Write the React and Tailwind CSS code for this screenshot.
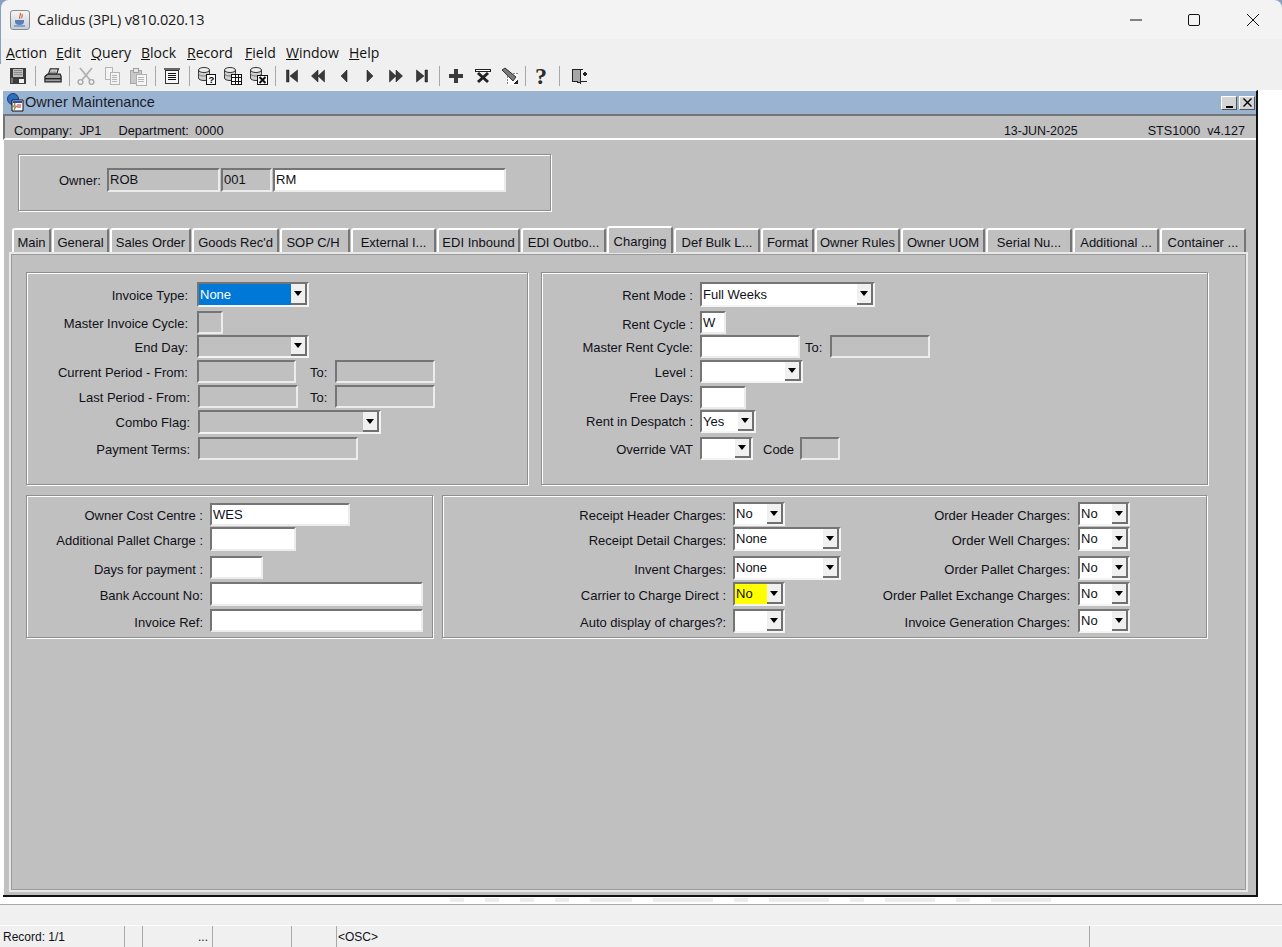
import React from 'react';

const ui = "font-['Liberation_Sans',Arial,sans-serif] text-[13px] text-[#101018]";

const tabs = [
  { label: 'Main', w: 'w-[39px]' },
  { label: 'General', w: 'w-[57px]' },
  { label: 'Sales Order', w: 'w-[81px]' },
  { label: "Goods Rec'd", w: 'w-[87px]' },
  { label: 'SOP C/H', w: 'w-[70px]', pad: 'pr-[4px]' },
  { label: 'External I...', w: 'w-[85px]' },
  { label: 'EDI Inbound', w: 'w-[83px]' },
  { label: 'EDI Outbo...', w: 'w-[85px]' },
  { label: 'Charging', w: 'w-[66px]', active: true },
  { label: 'Def Bulk L...', w: 'w-[86px]' },
  { label: 'Format', w: 'w-[53px]' },
  { label: 'Owner Rules', w: 'w-[85px]' },
  { label: 'Owner UOM', w: 'w-[84px]' },
  { label: 'Serial Nu...', w: 'w-[86px]' },
  { label: 'Additional ...', w: 'w-[86px]' },
  { label: 'Container ...', w: 'w-[86px]' },
];

const menus = [
  { a: 'A', b: 'ction', w: 'w-[50px]' },
  { a: 'E', b: 'dit', w: 'w-[35px]' },
  { a: 'Q', b: 'uery', w: 'w-[50px]' },
  { a: 'B', b: 'lock', w: 'w-[46px]' },
  { a: 'R', b: 'ecord', w: 'w-[58px]' },
  { a: 'F', b: 'ield', w: 'w-[41px]' },
  { a: 'W', b: 'indow', w: 'w-[63px]' },
  { a: 'H', b: 'elp', w: 'w-[40px]' },
];

// sunken text item, Oracle Forms look
const Field = ({ w, h = 'h-[23px]', value = '', disabled, className = '' }) => (
  <div
    className={`${w} ${h} shrink-0 flex items-center border-2 border-t-[#757575] border-l-[#757575] border-r-[#ececec] border-b-[#ececec] pl-px ${disabled ? 'bg-[#c0c0c0]' : 'bg-white'} ${className}`}
  >
    {value}
  </div>
);

const Combo = ({ w, h = 'h-[24px]', value = '', disabled, focus, yellow }) => (
  <div className={`${w} ${h} shrink-0 flex border-2 border-t-[#757575] border-l-[#757575] border-r-[#f4f4f4] border-b-[#f4f4f4]`}>
    <div
      className={`flex-1 flex items-center pl-px ${disabled ? 'bg-[#c0c0c0]' : focus ? 'bg-[#0078d7] text-white' : yellow ? 'bg-[#ffff00]' : 'bg-white'}`}
    >
      {value}
    </div>
    <div className="w-[16px] bg-[#f0f0f0] border-r-2 border-b-2 border-[#707070] flex items-center justify-center">
      <svg width="8" height="5" viewBox="0 0 8 5">
        <path d="M0 0h8L4 5z" fill="#000" />
      </svg>
    </div>
  </div>
);

const Row = ({ h, label, lw, gap = 'mr-[7px]', lh = 'leading-[25px]', children }) => (
  <div className={`flex items-start ${h}`}>
    <div className={`${lw} ${gap} ${lh} shrink-0 text-right whitespace-nowrap`}>{label}</div>
    {children}
  </div>
);

const etched = 'border border-[#8e8e8e] shadow-[inset_1px_1px_0_#fff,1px_1px_0_#fff]';

const Sep = ({ className = '' }) => <div className={`w-px h-[20px] bg-[#a8a8a8] shrink-0 ${className}`} />;

const Tool = ({ children, className = '' }) => (
  <div className={`w-[26px] h-[24px] flex items-center justify-center shrink-0 ${className}`}>{children}</div>
);

const Ico = ({ children, size = 20, box = 20 }) => (
  <svg width={size} height={size} viewBox={`0 0 ${box} ${box}`} shapeRendering="crispEdges">
    {children}
  </svg>
);

const Cylinder = () => (
  <g fill="#d0d0d0" stroke="#333" shapeRendering="auto">
    <path d="M1.5 4v8c0 1.5 2.5 2.5 5.5 2.5s5.5-1 5.5-2.5V4" />
    <ellipse cx="7" cy="4" rx="5.5" ry="2.5" fill="#eee" />
    <path d="M1.5 7.5c0 1.5 2.5 2.5 5.5 2.5s5.5-1 5.5-2.5" fill="none" stroke="#777" />
  </g>
);

const Tri = ({ d }) => (
  <svg width="14" height="14" viewBox="0 0 14 14">
    <path d={d} fill="#3a3a3a" stroke="#111" strokeWidth="0.5" />
  </svg>
);

const Toolbar = () => (
  <div className="h-[26px] pb-[2px] flex items-center pl-[5px] bg-[#f0f0f0] shrink-0">
    <Tool>
      <Ico>
        <path d="M2 2h15l1 1v15H2z" fill="#3c3c3c" />
        <path d="M5 3h10v8H5z" fill="#bcbcbc" />
        <path d="M6 4h8M6 6h8M6 8h8" stroke="#8a8a8a" />
        <path d="M11 13h5v4h-5z" fill="#f2f2f2" />
        <path d="M3 12h2v5H3z" fill="#777" />
      </Ico>
    </Tool>
    <Sep className="ml-[4px] mr-[4px]" />
    <Tool>
      <svg width="20" height="18" viewBox="0 0 22 20">
        <path d="M6 8l2-6h9l-2 6z" fill="#fff" stroke="#222" strokeWidth="1.3" />
        <path d="M2 10.5 5 8h14l1 2.5v6H2z" fill="#9a9a9a" stroke="#222" strokeWidth="1.3" />
        <path d="M2 13h18" stroke="#222" strokeWidth="1.5" />
        <path d="M8 4.5h7M7.5 6h7" stroke="#777" />
      </svg>
    </Tool>
    <Sep className="ml-[3px] mr-[3px]" />
    <Tool>
      <svg width="18" height="18" viewBox="0 0 18 18">
        <path d="M3 1l10 12M15 1 5 13" stroke="#b0b0b0" strokeWidth="1.8" fill="none" />
        <circle cx="3.5" cy="15" r="2.4" fill="none" stroke="#a8a8a8" strokeWidth="1.4" />
        <circle cx="14.5" cy="15" r="2.4" fill="none" stroke="#a8a8a8" strokeWidth="1.4" />
      </svg>
    </Tool>
    <Tool>
      <Ico>
        <path d="M3 1.5h7v12H3z" fill="#f4f4f4" stroke="#b4b4b4" />
        <path d="M8 6.5h9v12H8z" fill="#f4f4f4" stroke="#b4b4b4" />
        <path d="M10 9.5h5M10 11.5h5M10 13.5h5M10 15.5h5" stroke="#b4b4b4" />
      </Ico>
    </Tool>
    <Tool>
      <Ico>
        <path d="M2 4h11v13H2z" fill="#c8c8c8" stroke="#a8a8a8" />
        <path d="M5 2h5v4H5z" fill="#e8e8e8" stroke="#a0a0a0" />
        <path d="M8 8h10v11H8z" fill="#f6f6f6" stroke="#b0b0b0" />
        <path d="M10 11h6M10 13h6M10 15h6" stroke="#b4b4b4" />
      </Ico>
    </Tool>
    <Sep className="ml-[4px] mr-[3px]" />
    <Tool>
      <Ico>
        <path d="M2 2h16v2H2z" fill="#666" />
        <path d="M3.500 4.500h13v13h-13z" fill="#f6f6f6" stroke="#333" />
        <path d="M6 7h8M6 9h8M6 11h8M6 13h8" stroke="#111" />
      </Ico>
    </Tool>
    <Sep className="ml-[4px] mr-[4px]" />
    <Tool>
      <Ico>
        <Cylinder />
        <path d="M9.500 8.500h9v10h-9z" fill="#fff" stroke="#111" />
        <text x="11.5" y="17" fontSize="9.5" fontWeight="700" fontFamily="Liberation Sans" shapeRendering="auto">?</text>
      </Ico>
    </Tool>
    <Tool>
      <Ico>
        <Cylinder />
        <path d="M8.500 8.500h10v10h-10z" fill="#fff" stroke="#111" />
        <path d="M8.500 11.500h10M8.500 15h10M12 8.500v10M15.500 8.500v10" stroke="#111" />
      </Ico>
    </Tool>
    <Tool>
      <Ico>
        <Cylinder />
        <path d="M8.500 9.500h10v9h-10z" fill="#fff" stroke="#111" />
        <path d="M10.500 11l6 6M16.500 11l-6 6" stroke="#111" strokeWidth="2" shapeRendering="auto" />
      </Ico>
    </Tool>
    <Sep className="ml-[3px] mr-[3px]" />
    <Tool><Tri d="M1.500 1h2.500v12H1.500zM12.500 1v12L5 7z" /></Tool>
    <Tool><Tri d="M7 1v12L.5 7zM13.500 1v12L7 7z" /></Tool>
    <Tool><Tri d="M10 1v12L4 7z" /></Tool>
    <Tool><Tri d="M4 1v12l6-6z" /></Tool>
    <Tool><Tri d="M.5 1v12L7 7zM7 1v12l6.500-6z" /></Tool>
    <Tool><Tri d="M1.500 1v12L9 7zM10 1h2.500v12H10z" /></Tool>
    <Sep className="ml-[4px] mr-[3px]" />
    <Tool>
      <Ico>
        <path d="M8 3h4v5h5v4h-5v5H8v-5H3V8h5z" fill="#3a3a3a" />
      </Ico>
    </Tool>
    <Tool className="ml-px">
      <Ico>
        <path d="M2.500 3.500h15v2h-15z" fill="#fff" stroke="#222" />
        <path d="M5 7l10 9M15 7 5 16" stroke="#222" strokeWidth="3" shapeRendering="auto" />
      </Ico>
    </Tool>
    <Tool className="ml-px">
      <Ico>
        <path d="M7 7h11v12H7z" fill="#fff" />
        <path d="M7 7h11M7 7v12" stroke="#888" strokeDasharray="2 1" fill="none" />
        <path d="M2 4l3-2 11 9-3 4z" fill="#7a7a7a" stroke="#333" shapeRendering="auto" />
        <path d="M13 18l5-4v4z" fill="#222" />
      </Ico>
    </Tool>
    <Sep className="ml-[2px] mr-[2px]" />
    <Tool>
      <span className="font-['Liberation_Serif',serif] font-bold text-[24px] leading-none text-[#2a2a2a]">?</span>
    </Tool>
    <Sep className="ml-[5px] mr-[5px]" />
    <Tool>
      <Ico>
        <path d="M4 3h8v14l-5-2H4z" fill="#a8a8a8" stroke="#222" />
        <path d="M12 3h2v1M12 15h7" stroke="#222" fill="none" />
        <path d="M15 8h4M17 6v4" stroke="#222" strokeWidth="1.2" />
      </Ico>
    </Tool>
  </div>
);

const ChargeCol = ({ rows, lw, gap }) => (
  <div className="flex flex-col">
    {rows.map((r) => (
      <Row key={r.label} h={r.h} label={r.label} lw={lw} gap={gap} lh="leading-[27px]">
        {r.field}
      </Row>
    ))}
  </div>
);

const leftCharges = [
  { label: 'Receipt Header Charges:', h: 'h-[25px]', field: <Combo w="w-[52px]" value="No" /> },
  { label: 'Receipt Detail Charges:', h: 'h-[29px]', field: <Combo w="w-[108px]" value="None" /> },
  { label: 'Invent Charges:', h: 'h-[26px]', field: <Combo w="w-[108px]" value="None" /> },
  { label: 'Carrier to Charge Direct :', h: 'h-[27px]', field: <Combo w="w-[52px]" value="No" yellow /> },
  { label: 'Auto display of charges?:', h: 'h-[25px]', field: <Combo w="w-[52px]" /> },
];

const rightCharges = [
  { label: 'Order Header Charges:', h: 'h-[25px]', field: <Combo w="w-[52px]" value="No" /> },
  { label: 'Order Well Charges:', h: 'h-[29px]', field: <Combo w="w-[52px]" value="No" /> },
  { label: 'Order Pallet Charges:', h: 'h-[26px]', field: <Combo w="w-[52px]" value="No" /> },
  { label: 'Order Pallet Exchange Charges:', h: 'h-[27px]', field: <Combo w="w-[52px]" value="No" /> },
  { label: 'Invoice Generation Charges:', h: 'h-[25px]', field: <Combo w="w-[52px]" value="No" /> },
];

const ghost = ['w-[14px]', 'w-[14px]', 'w-[14px]', 'w-[14px]', 'w-[42px]', 'w-[60px]', 'w-[14px]', 'w-[60px]', 'w-[14px]', 'w-[50px]', 'w-[14px]', 'w-[60px]'];

const App = () => {
  return (
    <div className={`${ui} w-[1282px] h-[947px] overflow-hidden flex flex-col bg-[#8aa0c0]`}>
      {/* title bar */}
      <div className="h-[39px] shrink-0 ml-px rounded-t-lg bg-[#f3f3f3] flex items-center font-['Open_Sans',sans-serif] text-[14px] text-[#1a1a1a]">
        <div className="ml-[9px] w-[20px] h-[20px] rounded-[3px] border border-[#8a8a8a] bg-gradient-to-b from-[#f4f4f4] to-[#c4cedd] flex items-center justify-center">
          <svg width="14" height="16" viewBox="0 0 14 16">
            <path d="M7 1c2 2-2 3 0 6M9 2c1 2-1 3 0 4" stroke="#d9622b" fill="none" strokeWidth="1.2" />
            <path d="M2 8h9v2c0 2-2 3-4.500 3S2 12 2 10z" fill="#5a7fb5" />
            <path d="M1 14h11" stroke="#5a7fb5" strokeWidth="1.2" />
          </svg>
        </div>
        <span className="ml-[7px] text-[14.5px] tracking-[-0.15px]">Calidus (3PL) v810.020.13</span>
        <div className="ml-auto flex items-center">
          <svg width="12" height="12" viewBox="0 0 12 12" className="mr-[46px]"><path d="M0 6h12" stroke="#111" /></svg>
          <svg width="12" height="12" viewBox="0 0 12 12" className="mr-[47px]"><rect x=".5" y=".5" width="11" height="11" rx="1.5" fill="none" stroke="#111" /></svg>
          <svg width="12" height="12" viewBox="0 0 12 12" className="mr-[23px]"><path d="M0 0l12 12M12 0 0 12" stroke="#111" /></svg>
        </div>
      </div>

      {/* menu */}
      <div className="h-[25px] pt-px shrink-0 ml-px bg-[#f0f0f0] flex items-center pl-[5px] font-['Open_Sans',sans-serif] text-[14px] text-[#111]">
        {menus.map((m) => (
          <span key={m.a} className={m.w}><span className="underline">{m.a}</span>{m.b}</span>
        ))}
      </div>

      <Toolbar />

      {/* mdi area */}
      <div className="flex-1 bg-white flex flex-col">
        <div className="h-[807px] w-[1255px] ml-[3px] shrink-0 flex flex-col bg-[#c0c0c0] border-r-2 border-b-2 border-[#111] border-t border-t-[#f4f4f4]">
          <div className="h-[23px] shrink-0 bg-[#9ab3d0] flex items-center pl-[3px] pr-[1px] text-[14.5px] text-[#1c1c28]">
            <svg width="19" height="19" viewBox="0 0 19 19" className="shrink-0">
              <circle cx="7" cy="6" r="5.500" fill="#2e6fc0" stroke="#1a3a80" />
              <path d="M6 7h11v11H6z" fill="#fff" stroke="#111" />
              <path d="M7 8h9v2H7z" fill="#2a4fb0" />
              <path d="M11 12h4M11 14h4" stroke="#c22" />
              <path d="M9 10 7 14h2l-1 3 3-4H9z" fill="#d8c020" stroke="#333" strokeWidth=".4" />
            </svg>
            <span className="pt-px">Owner Maintenance</span>
            <div className="ml-auto flex gap-[2px]">
              <div className="w-[16px] h-[14px] bg-[#d4d4d4] border border-t-white border-l-white border-r-[#555] border-b-[#555] flex items-end justify-center pb-px">
                <div className="w-[7px] h-[2px] bg-black" />
              </div>
              <div className="w-[16px] h-[14px] bg-[#d4d4d4] border border-t-white border-l-white border-r-[#555] border-b-[#555] flex items-center justify-center">
                <svg width="9" height="9" viewBox="0 0 9 9"><path d="M.5.5l8 8M8.500.5l-8 8" stroke="#000" strokeWidth="1.4" /></svg>
              </div>
            </div>
          </div>

          <div className="flex-1 flex flex-col border-l border-white">
            {/* company bar */}
            <div className="h-[26px] shrink-0 flex items-center text-[12.8px] border-t-2 border-t-[#757575] border-l-2 border-l-[#757575] -ml-px pl-[9px] pr-[11px] pt-[8px] border-b-2 border-b-white">
              <span>Company:&nbsp; JP1</span>
              <span className="ml-[17px]">Department:&nbsp;&thinsp;0000</span>
              <span className="ml-auto text-[12.4px]">13-JUN-2025</span>
              <span className="ml-[70px] text-[12.6px]">STS1000&nbsp; v4.127</span>
            </div>

            {/* owner block */}
            <div className={`${etched} ml-[14px] mt-[14px] w-[533px] h-[57px] shrink-0 flex items-start pt-[13px] pl-[40px]`}>
              <div className="w-[41px] leading-[25px] mr-[7px] text-right">Owner:</div>
              <Field w="w-[113px]" h="h-[24px]" value="ROB" disabled />
              <Field w="w-[51px]" h="h-[24px]" value="001" disabled className="ml-px" />
              <Field w="w-[233px]" h="h-[24px]" value="RM" className="ml-px" />
            </div>

            {/* tabs */}
            <div className="h-[24px] mt-[17px] shrink-0 ml-[8px] flex items-end gap-px relative z-10">
              {tabs.map((t) => (
                <div
                  key={t.label}
                  className={`${t.w} ${t.pad || ''} ${t.active ? 'h-[27px] -mb-px bg-[#c0c0c0] pt-px' : 'h-[24px]'} shrink-0 text-center whitespace-nowrap leading-[26px] border-t-2 border-l-2 border-white border-r-2 border-r-[#757575] rounded-t-[3px]`}
                >
                  {t.label}
                </div>
              ))}
            </div>

            {/* tab canvas */}
            <div className="ml-[5px] w-[1239px] h-[640px] shrink-0 border-2 border-[#e8e8e8] outline outline-1 outline-[#9a9a9a] -outline-offset-[3px] pl-[15px] pt-[18px]">
              <div className="flex gap-[13px]">
                <div className={`${etched} w-[502px] h-[213px] pt-[9px]`}>
                  <Row h="h-[29px]" lw="w-[161px]" gap="mr-[9px]" lh="leading-[27px]" label="Invoice Type:"><Combo w="w-[112px]" h="h-[25px]" value="None" focus /></Row>
                  <Row h="h-[24px]" lw="w-[161px]" gap="mr-[9px]" label="Master Invoice Cycle:"><Field w="w-[26px]" disabled /></Row>
                  <Row h="h-[25px]" lw="w-[161px]" gap="mr-[9px]" label="End Day:"><Combo w="w-[112px]" h="h-[23px]" disabled /></Row>
                  <Row h="h-[25px]" lw="w-[161px]" gap="mr-[9px]" label="Current Period - From:">
                    <Field w="w-[99px]" disabled />
                    <span className="ml-[14px] w-[25px] leading-[25px]">To:</span>
                    <Field w="w-[100px]" disabled />
                  </Row>
                  <Row h="h-[25px]" lw="w-[163px]" gap="mr-[8px]" label="Last Period - From:">
                    <Field w="w-[100px]" disabled />
                    <span className="ml-[12px] w-[25px] leading-[25px]">To:</span>
                    <Field w="w-[100px]" disabled />
                  </Row>
                  <Row h="h-[27px]" lw="w-[163px]" gap="mr-[8px]" label="Combo Flag:"><Combo w="w-[183px]" disabled /></Row>
                  <Row h="h-[24px]" lw="w-[163px]" gap="mr-[8px]" label="Payment Terms:"><Field w="w-[160px]" disabled /></Row>
                </div>

                <div className={`${etched} w-[667px] h-[213px] pt-[9px]`}>
                  <Row h="h-[29px]" lw="w-[151px]" gap="mr-[7px]" lh="leading-[27px]" label="Rent Mode :"><Combo w="w-[175px]" h="h-[25px]" value="Full Weeks" /></Row>
                  <Row h="h-[24px]" lw="w-[151px]" gap="mr-[7px]" lh="leading-[27px]" label="Rent Cycle :"><Field w="w-[26px]" value="W" /></Row>
                  <Row h="h-[25px]" lw="w-[151px]" gap="mr-[7px]" label="Master Rent Cycle:">
                    <Field w="w-[100px]" />
                    <span className="ml-[5px] w-[25px] leading-[25px]">To:</span>
                    <Field w="w-[100px]" disabled />
                  </Row>
                  <Row h="h-[26px]" lw="w-[151px]" gap="mr-[7px]" label="Level :"><Combo w="w-[103px]" h="h-[23px]" /></Row>
                  <Row h="h-[24px]" lw="w-[151px]" gap="mr-[7px]" lh="leading-[24px]" label="Free Days:"><Field w="w-[46px]" /></Row>
                  <Row h="h-[27px]" lw="w-[151px]" gap="mr-[7px]" lh="leading-[24px]" label="Rent in Despatch :"><Combo w="w-[56px]" h="h-[23px]" value="Yes" /></Row>
                  <Row h="h-[24px]" lw="w-[151px]" gap="mr-[7px]" label="Override VAT">
                    <Combo w="w-[53px]" h="h-[23px]" />
                    <span className="ml-[10px] w-[37px] leading-[25px]">Code</span>
                    <Field w="w-[40px]" disabled />
                  </Row>
                </div>
              </div>

              <div className="flex gap-[9px] mt-[10px]">
                <div className={`${etched} w-[407px] h-[143px] pt-[7px]`}>
                  <Row h="h-[24px]" lw="w-[176px]" label="Owner Cost Centre :"><Field w="w-[140px]" value="WES" /></Row>
                  <Row h="h-[29px]" lw="w-[176px]" lh="leading-[27px]" label="Additional Pallet Charge :"><Field w="w-[86px]" h="h-[24px]" /></Row>
                  <Row h="h-[26px]" lw="w-[176px]" lh="leading-[27px]" label="Days for payment :"><Field w="w-[53px]" /></Row>
                  <Row h="h-[27px]" lw="w-[176px]" lh="leading-[27px]" label="Bank Account No:"><Field w="w-[213px]" h="h-[24px]" /></Row>
                  <Row h="h-[24px]" lw="w-[176px]" lh="leading-[27px]" label="Invoice Ref:"><Field w="w-[213px]" /></Row>
                </div>

                <div className={`${etched} w-[765px] h-[143px] pt-[6px] flex`}>
                  <div className="w-[398px] shrink-0">
                    <ChargeCol rows={leftCharges} lw="w-[283px]" gap="mr-[7px]" />
                  </div>
                  <ChargeCol rows={rightCharges} lw="w-[229px]" gap="mr-[8px]" />
                </div>
              </div>
            </div>
          </div>
        </div>

        {/* ghost of the window behind */}
        <div className="h-[7px] shrink-0 pl-[450px] pt-px flex gap-[21px] overflow-hidden">
          {ghost.map((g, i) => (
            <div key={i} className={`${g} h-[4px] bg-[#ececec]`} />
          ))}
        </div>

        {/* hint line */}
        <div className="h-[22px] shrink-0 bg-[#f0f0f0] border-t border-[#a8a8a8] border-b border-b-white" />

        {/* status line */}
        <div className="flex-1 bg-[#f0f0f0] flex items-center text-[12px] border-b border-[#a8a8a8]">
          <div className="w-[125px] pl-[3px] border-r border-[#a8a8a8] h-full leading-[22px]">Record: 1/1</div>
          <div className="w-[18px] border-r border-[#a8a8a8] h-full" />
          <div className="w-[70px] pr-[4px] text-right border-r border-[#a8a8a8] h-full leading-[22px]">...</div>
          <div className="w-[79px] border-r border-[#a8a8a8] h-full" />
          <div className="w-[45px] border-r border-[#a8a8a8] h-full" />
          <div className="w-[753px] pl-[1px] border-r border-[#a8a8a8] h-full leading-[22px]">&lt;OSC&gt;</div>
        </div>
      </div>
    </div>
  );
};

export default App;
